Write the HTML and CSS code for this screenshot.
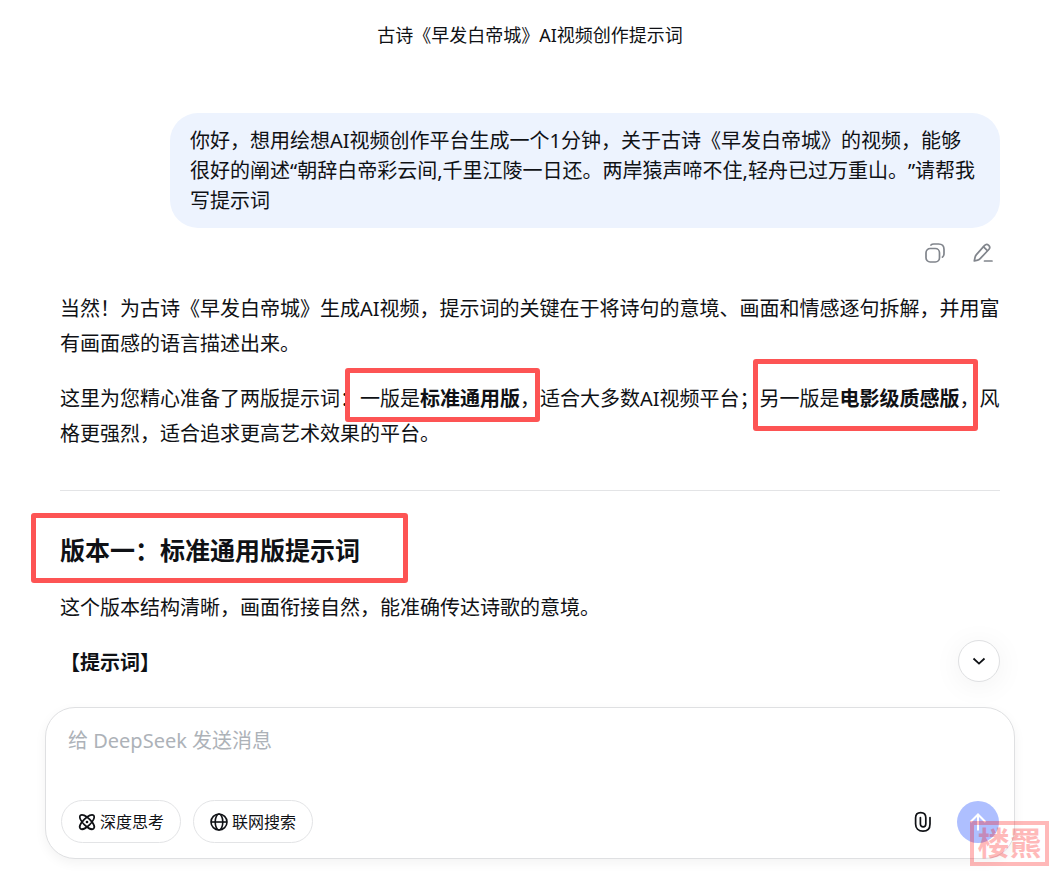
FILE: index.html
```html
<!DOCTYPE html>
<html lang="zh-CN">
<head>
<meta charset="UTF-8">
<meta name="viewport" content="width=device-width, initial-scale=1.0">
<title>古诗《早发白帝城》AI视频创作提示词</title>
<link rel="stylesheet" href="styles.css">
</head>
<body>
<header class="chat-header">
<h1>古诗《早发白帝城》AI视频创作提示词</h1>
</header>
<main class="messages">
<div class="message user">你好，想用绘想AI视频创作平台生成一个1分钟，关于古诗《早发白帝城》的视频，能够很好的阐述“朝辞白帝彩云间,千里江陵一日还。两岸猿声啼不住,轻舟已过万重山。”请帮我写提示词</div>
<div class="message-actions">
<button type="button" class="icon-button" aria-label="复制">
<svg viewBox="0 0 20 20" width="20" height="20" fill="none" stroke="currentColor" stroke-width="1.7" stroke-linecap="round">
<rect x="1" y="5.5" width="13.5" height="13.5" rx="4.2"/>
<path d="M6 2 C6.7 1.2 7.5 1 8.8 1 H13.5 C17.3 1 19 2.7 19 6.3 V10.5 C19 12.5 18.5 13.6 17.4 14.2"/>
</svg>
</button>
<button type="button" class="icon-button" aria-label="编辑">
<svg viewBox="0 0 20 20" width="20" height="20" fill="none" stroke="currentColor" stroke-width="1.7" stroke-linecap="round" stroke-linejoin="round">
<path d="M11.4 2.6 C12.7 1.2 14.4 1.1 15.7 2.3 C17 3.6 17 5.2 15.8 6.5 L7.4 15.4 C6.6 16.3 5.8 16.8 4.7 17.1 L1.3 18 L2 14.5 C2.2 13.4 2.6 12.5 3.4 11.6 Z"/>
<path d="M10.6 3.8 L14.4 7.6 M11.5 18 H19"/>
</svg>
</button>
</div>
<div class="message bot">
<p>当然！为古诗《早发白帝城》生成AI视频，提示词的关键在于将诗句的意境、画面和情感逐句拆解，并用富有画面感的语言描述出来。</p>
<p>这里为您精心准备了两版提示词：<span class="mark mark-standard">一版是<strong>标准通用版</strong>，</span>适合大多数AI视频平台；<span class="mark mark-cinema">另一版是<strong>电影级质感版</strong>，</span>风格更强烈，适合追求更高艺术效果的平台。</p>
<hr>
<h2><span class="mark mark-title">版本一：标准通用版提示词</span></h2>
<p>这个版本结构清晰，画面衔接自然，能准确传达诗歌的意境。</p>
<p><strong>【提示词】</strong></p>
</div>
</main>
<form class="input-area">
<button type="button" class="scroll-button" aria-label="滚动到底部">
<svg viewBox="0 0 14 14" width="14" height="14" fill="none" stroke="currentColor" stroke-width="1.8">
<path d="M1.5 4.5 L7 9.6 L12.5 4.5"/>
</svg>
</button>
<textarea class="message-input" rows="2" placeholder="给 DeepSeek 发送消息" aria-label="给 DeepSeek 发送消息"></textarea>
<div class="toolbar">
<button type="button" class="toggle-button">
<svg viewBox="0 0 18 18" width="18" height="18" fill="none" stroke="currentColor" stroke-width="1.7">
<path d="M2.4 2.4 C4 .8 8 2.6 11.7 6.3 C15.4 10 17.2 14 15.6 15.6 C14 17.2 10 15.4 6.3 11.7 C2.6 8 .8 4 2.4 2.4 Z"/>
<path d="M15.6 2.4 C17.2 4 15.4 8 11.7 11.7 C8 15.4 4 17.2 2.4 15.6 C.8 14 2.6 10 6.3 6.3 C10 2.6 14 .8 15.6 2.4 Z"/>
<circle cx="9" cy="9" r="1.3" fill="currentColor" stroke="none"/>
</svg>
深度思考
</button>
<button type="button" class="toggle-button">
<svg viewBox="0 0 18 18" width="18" height="18" fill="none" stroke="currentColor" stroke-width="1.6">
<circle cx="9" cy="9" r="8"/>
<ellipse cx="9" cy="9" rx="3.8" ry="8"/>
<path d="M1 9 H17"/>
</svg>
联网搜索
</button>
<button type="button" class="attach-button" aria-label="上传附件">
<svg viewBox="0 0 18 22" width="18" height="22" fill="none" stroke="currentColor" stroke-width="1.7" stroke-linecap="round">
<path d="M16 6.5 V13 C16 17.6 13.2 20.2 9 20.2 C4.4 20.2 1.6 17.4 1.6 13 V6.8 C1.6 3.6 3.6 1.6 6.7 1.6 C9.8 1.6 11.8 3.6 11.8 6.8 V13 C11.8 14.8 10.8 15.8 9.2 15.8 C7.6 15.8 6.4 14.8 6.4 13 V6.5"/>
</svg>
</button>
<button type="submit" class="send-button" aria-label="发送">
<svg viewBox="0 0 18 18" width="18" height="18" fill="none" stroke="currentColor" stroke-width="2">
<path d="M9 17.5 V2 M1.5 9 L9 1.5 L16.5 9"/>
</svg>
</button>
</div>
</form>
<div class="seal">楼羆</div>
</body>
</html>
```
FILE: styles.css
```css
* {
    box-sizing: border-box;
}
body {
    font-family: "Noto Sans", "Noto Sans CJK SC", sans-serif;
    font-size: 20px;
    text-spacing-trim: space-all;
    margin: 0;
    padding: 0 40px 12px 45px;
    min-height: 100vh;
    display: flex;
    flex-direction: column;
    background-color: white;
    color: #0f1115;
}
button {
    font-family: inherit;
    color: inherit;
    padding: 0;
    border: none;
    background: none;
    cursor: pointer;
    display: flex;
    align-items: center;
    justify-content: center;
}
.chat-header {
    height: 68px;
    display: flex;
    align-items: center;
    justify-content: center;
}
.chat-header h1 {
    margin: 0;
    font-size: 18px;
    font-weight: 400;
}
.messages {
    flex: 1;
    padding: 45px 15px 26px;
}
.message.user {
    margin-left: 110px;
    padding: 13px 20px 12px;
    line-height: 30px;
    background-color: #edf3fe;
    border-radius: 28px;
}
.message-actions {
    display: flex;
    justify-content: flex-end;
    gap: 28px;
    padding: 15px 7px 28px;
    color: #81858c;
}
.message.bot {
    line-height: 35px;
}
.message.bot p {
    margin: 0 0 20px;
}
.message.bot p:last-child {
    margin-bottom: 0;
}
.message.bot h2 {
    margin: 0 0 22px;
    font-size: 25px;
    line-height: 35px;
}
.message.bot hr {
    margin: 39px 0 42px;
    border: none;
    border-top: 1px solid #e3e4e6;
}
/* red frames over the highlighted phrases */
.mark {
    position: relative;
}
.mark::after {
    content: "";
    position: absolute;
    border: 5px solid #fd5454;
    border-radius: 3px;
}
.mark-standard::after {
    inset: -17px 0 -10px -15px;
}
.mark-cinema::after {
    inset: -26px 2px -19px -7px;
}
.mark-title::after {
    inset: -20px -48px -16px -29px;
}
.input-area {
    position: relative;
    padding: 15px;
    border: 1px solid #dfe0e2;
    border-radius: 30px;
    background-color: white;
    box-shadow: 0 4px 12px rgba(0, 0, 0, 0.05);
}
.scroll-button {
    position: absolute;
    top: -68px;
    right: 14px;
    width: 42px;
    height: 42px;
    border: 1px solid #dfe0e2;
    border-radius: 50%;
    background-color: white;
    box-shadow: 0 4px 30px rgba(0, 0, 0, 0.06);
}
.message-input {
    display: block;
    width: 100%;
    height: 60px;
    margin-bottom: 17px;
    padding: 3px 7px;
    border: none;
    outline: none;
    resize: none;
    font-family: inherit;
    font-size: 20px;
    line-height: 30px;
    background: none;
}
.message-input::placeholder {
    color: #adb2b8;
}
.toolbar {
    display: flex;
    align-items: center;
    gap: 12px;
}
.toggle-button {
    width: 120px;
    height: 43px;
    gap: 4px;
    border: 1px solid #e3e4e6;
    border-radius: 22px;
    font-size: 16px;
    line-height: 20px;
}
.attach-button {
    width: 44px;
    height: 42px;
    margin-left: auto;
}
.send-button {
    width: 42px;
    height: 42px;
    border-radius: 50%;
    background-color: #aebfff;
    color: white;
}
/* seal stamped over the corner */
.seal {
    position: absolute;
    right: 6px;
    bottom: 5px;
    width: 79px;
    height: 45px;
    border: 4px solid #ff0000;
    font-size: 32px;
    font-weight: 700;
    line-height: 36px;
    text-align: center;
    color: #ff0000;
    opacity: 0.27;
}
```
